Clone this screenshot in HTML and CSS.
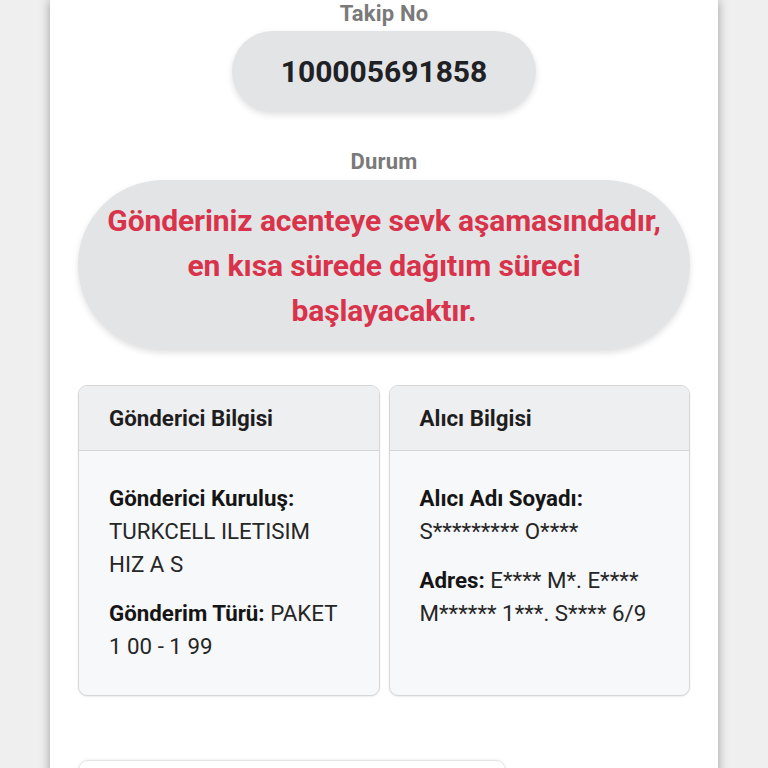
FILE: index.html
```html
<!DOCTYPE html>
<html lang="tr">
<head>
<meta charset="utf-8">
<title>Gönderi Takip</title>
<link rel="stylesheet" href="styles.css">
</head>
<body>
<main class="page">
  <section class="field">
    <div class="label">Takip No</div>
    <div class="pill pill-number">100005691858</div>
  </section>
  <section class="field field-status">
    <div class="label">Durum</div>
    <div class="pill pill-status">Gönderiniz acenteye sevk aşamasındadır,<br>en kısa sürede dağıtım süreci<br>başlayacaktır.</div>
  </section>
  <section class="cards">
    <div class="card">
      <div class="card-head">Gönderici Bilgisi</div>
      <div class="card-body">
        <p><b>Gönderici Kuruluş:</b><br>TURKCELL ILETISIM<br>HIZ A S</p>
        <p><b>Gönderim Türü:</b> PAKET<br>1 00 - 1 99</p>
      </div>
    </div>
    <div class="card">
      <div class="card-head">Alıcı Bilgisi</div>
      <div class="card-body">
        <p><b>Alıcı Adı Soyadı:</b><br>S********* O****</p>
        <p><b>Adres:</b> E**** M*. E****<br>M****** 1***. S**** 6/9</p>
      </div>
    </div>
  </section>
  <section class="next-card"></section>
</main>
</body>
</html>
```

FILE: styles.css
```css
html, body {
  margin: 0;
  padding: 0;
  background: #efefef;
  font-family: Roboto, "Liberation Sans", Arial, sans-serif;
}
.page {
  width: 612px;
  min-height: 768px;
  margin: 0 auto;
  padding: 0 28px 0 28px;
  background: #ffffff;
  box-shadow: 0 0 10px rgba(0, 0, 0, 0.35);
  display: flex;
  flex-direction: column;
  align-items: center;
  box-sizing: content-box;
}
.field {
  display: flex;
  flex-direction: column;
  align-items: center;
  width: 100%;
}
.field-status {
  margin-top: 36px;
}
.label {
  font-size: 22px;
  line-height: 28px;
  font-weight: 700;
  color: #7a7a7a;
  letter-spacing: 0.2px;
}
.pill {
  margin-top: 3px;
  background: #e3e4e6;
  border-radius: 999px;
  box-shadow: 0 3px 6px rgba(0, 0, 0, 0.12);
  text-align: center;
}
.pill-number {
  width: 304px;
  height: 81px;
  display: flex;
  align-items: center;
  justify-content: center;
  font-size: 30px;
  font-weight: 700;
  color: #202124;
  letter-spacing: 0;
}
.pill-status {
  margin-top: 4px;
  width: 612px;
  box-sizing: border-box;
  padding: 18px 10px 17px;
  font-size: 30px;
  line-height: 45px;
  font-weight: 700;
  color: #d8334a;
  letter-spacing: -0.1px;
  border-radius: 86px;
}
.cards {
  margin-top: 35px;
  width: 612px;
  display: grid;
  grid-template-columns: 1fr 1fr;
  gap: 9px;
}
.card {
  border: 1px solid #d6d6d6;
  border-radius: 9px;
  overflow: hidden;
  background: #f7f8fa;
  display: flex;
  flex-direction: column;
  box-shadow: 0 1px 2px rgba(0, 0, 0, 0.08);
}
.card-head {
  height: 64px;
  display: flex;
  align-items: center;
  padding-left: 30px;
  background: #eeeff1;
  border-bottom: 1px solid #d6d6d6;
  font-size: 22.3px;
  font-weight: 700;
  color: #1e1e1e;
}
.card-body {
  padding: 31px 10px 32px 30px;
  font-size: 22.3px;
  line-height: 33px;
  color: #262626;
}
.card-body p {
  margin: 0 0 16px 0;
}
.card-body p:last-child {
  margin-bottom: 0;
}
.card-body b {
  color: #151515;
}
.next-card {
  margin-top: 64px;
  align-self: flex-start;
  width: 426px;
  height: 40px;
  border: 1px solid #e4e4e4;
  border-radius: 10px;
  background: #ffffff;
  box-shadow: 0 -1px 3px rgba(0, 0, 0, 0.05);
}
```
